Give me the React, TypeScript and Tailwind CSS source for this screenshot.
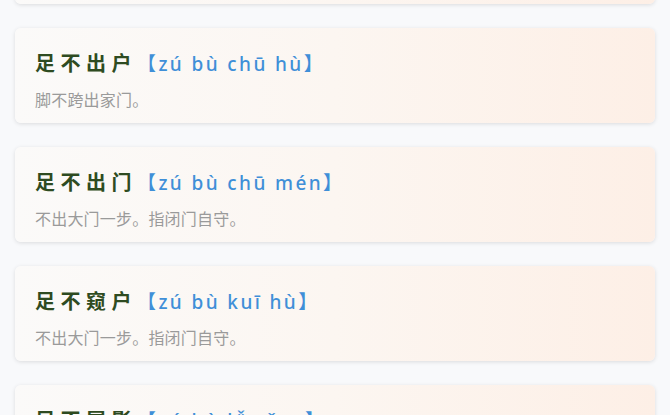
import React from "react";

const items = [
  { word: "足不逾户", py: "zú bù yú hù", desc: "脚不跨出家门。" },
  { word: "足不出户", py: "zú bù chū hù", desc: "脚不跨出家门。" },
  { word: "足不出门", py: "zú bù chū mén", desc: "不出大门一步。指闭门自守。" },
  { word: "足不窥户", py: "zú bù kuī hù", desc: "不出大门一步。指闭门自守。" },
  { word: "足不履影", py: "zú bù lǚ yǐng", desc: "不踏着自己的影子。" },
];

export default function App() {
  return (
    <div
      className="w-[670px] h-[415px] overflow-hidden bg-[#f8f9fb]"
      style={{ fontFamily: '"Noto Sans", "Noto Sans CJK SC", sans-serif' }}
    >
      <div className="flex flex-col gap-[24px] px-[15px] -mt-[91px]">
        {items.map((it, i) => (
          <div
            key={i}
            className="h-[95px] rounded-[6px] bg-gradient-to-r from-[#fbfaf9] via-[#fcf6f1] to-[#fdefe6] shadow-[0_1px_4px_rgba(0,0,0,0.12)] pl-[20px] pt-[22px]"
          >
            <div className="flex items-center h-[28px] leading-[28px] whitespace-nowrap">
              <span className="text-[20px] font-bold tracking-[5.5px] text-[#2e4b21]">
                {it.word}
              </span>
              <span className="text-[19px] font-medium tracking-[2.4px] text-[#3f8fd8]">
                【{it.py}】
              </span>
            </div>
            <div className="mt-[11px] h-[22px] leading-[22px] text-[16px] tracking-[0.2px] text-[#9a9a9a] whitespace-nowrap">
              {it.desc}
            </div>
          </div>
        ))}
      </div>
    </div>
  );
}
